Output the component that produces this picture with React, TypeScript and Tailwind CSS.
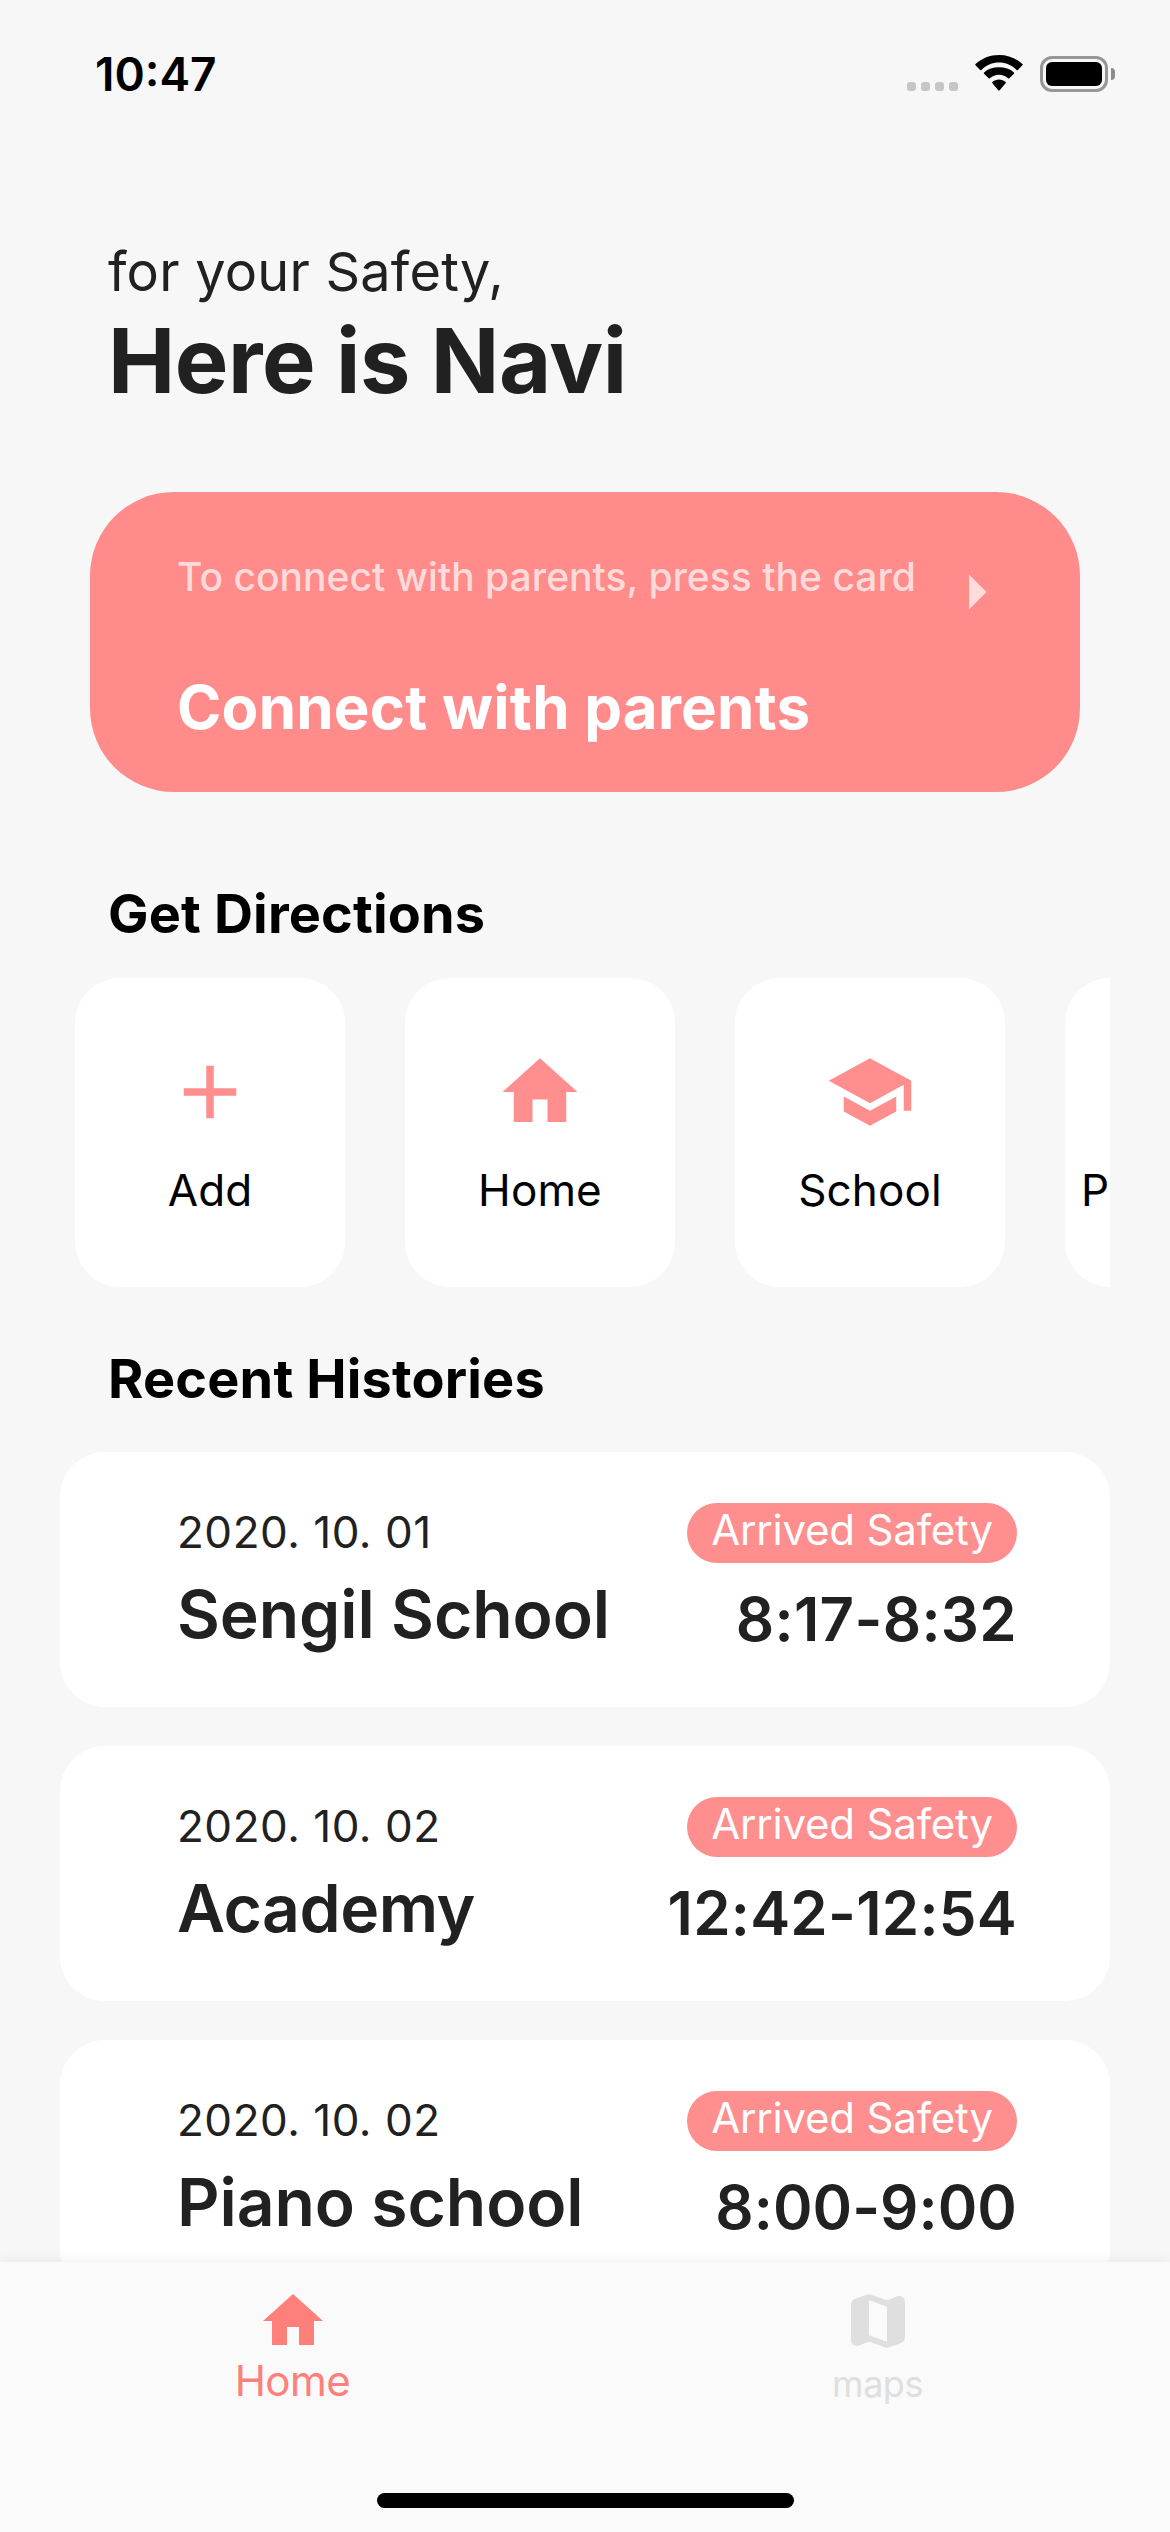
import React from "react";

type IconProps = { className?: string };

const Plus = ({ className }: IconProps) => (
  <svg viewBox="0 0 24 24" fill="currentColor" className={className}>
    <path d="M19 13h-6v6h-2v-6H5v-2h6V5h2v6h6v2z" />
  </svg>
);

const House = ({ className }: IconProps) => (
  <svg viewBox="0 0 24 24" fill="currentColor" className={className}>
    <path d="M10 20v-6h4v6h5v-8h3L12 3 2 12h3v8z" />
  </svg>
);

const Graduation = ({ className }: IconProps) => (
  <svg viewBox="0 0 24 24" fill="currentColor" className={className}>
    <path d="M5 13.18v4L12 21l7-3.82v-4L12 17l-7-3.82zM12 3L1 9l11 6 9-4.91V17h2V9L12 3z" />
  </svg>
);

const MapFold = ({ className }: IconProps) => (
  <svg viewBox="0 0 24 24" fill="currentColor" className={className}>
    <path d="M14.65 4.98l-5-1.75c-.42-.15-.88-.15-1.3-.01L4.36 4.56C3.55 4.84 3 5.6 3 6.46v11.85c0 1.41 1.41 2.37 2.72 1.86l2.93-1.14c.22-.09.47-.09.69-.01l5 1.75c.42.15.88.15 1.3.01l3.99-1.34c.81-.27 1.36-1.04 1.36-1.9V5.69c0-1.41-1.41-2.37-2.72-1.86l-2.93 1.14c-.22.08-.46.09-.69.01zM15 18.89l-6-2.11V5.11l6 2.11v11.67z" />
  </svg>
);

const ArrowRight = ({ className }: IconProps) => (
  <svg viewBox="0 0 24 24" fill="currentColor" className={className}>
    <path d="M10 17l5-5-5-5v10z" />
  </svg>
);

const Wifi = ({ className }: IconProps) => (
  <svg viewBox="0 0 48 36" fill="currentColor" className={className}>
    <path d="M24 7.6c6.8 0 13 2.7 17.6 7.3.35.35.9.35 1.25 0l4.6-4.6c.4-.4.4-.95 0-1.3C41.2 3.300 33 0 24 0S6.800 3.300.55 9c-.4.350-.4.900 0 1.300l4.600 4.600c.35.350.900.350 1.250 0C11 10.300 17.200 7.600 24 7.600z" />
    <path d="M24 19.700c3.500 0 6.700 1.300 9.100 3.500.4.350.900.350 1.250 0l4.600-4.500c.4-.4.400-.950 0-1.300C35 13.800 29.800 12.200 24 12.200S13 13.800 9.050 17.400c-.4.350-.4.900 0 1.300l4.600 4.500c.35.350.850.350 1.250 0 2.400-2.200 5.600-3.500 9.100-3.500z" />
    <path d="M30.600 28.300c.4-.400.400-.900 0-1.250C28.900 25.500 26.600 24.600 24 24.600s-4.900.900-6.600 2.450c-.4.350-.4.850 0 1.250l5.900 6.900c.4.400 1 .4 1.400 0l5.900-6.900z" />
  </svg>
);

const Battery = () => (
  <div className="flex items-center gap-[3px]">
    <div className="h-9 w-[68px] rounded-[12px] border-3 border-[#979797] p-[3px]">
      <div className="h-full w-full rounded-[6px] bg-black" />
    </div>
    <div className="h-3 w-1 rounded-r-full bg-[#8c8c8c]" />
  </div>
);

const StatusBar = () => (
  <div className="flex h-[140px] shrink-0 items-start justify-between pr-[55px] pl-[95px]">
    <div className="mt-[51px] text-[46px] leading-[46px] font-semibold text-black">10:47</div>
    <div className="mt-[55px] flex items-start">
      <div className="mt-[27px] flex gap-[5px]">
        {[0, 1, 2, 3].map((i) => (
          <span key={i} className="size-[9px] rounded-[3px] bg-[#c6c6c6]" />
        ))}
      </div>
      <Wifi className="ml-[17px] h-9 w-12 text-black" />
      <div className="mt-px ml-[17px]">
        <Battery />
      </div>
    </div>
  </div>
);

const places = [
  { label: "Add", Icon: Plus },
  { label: "Home", Icon: House },
  { label: "School", Icon: Graduation },
];

const histories = [
  {
    date: "2020. 10. 01",
    place: "Sengil School",
    placeClass: "tracking-[-0.1px]",
    time: "8:17-8:32",
    timeClass: "tracking-[0.3px]",
  },
  {
    date: "2020. 10. 02",
    place: "Academy",
    placeClass: "tracking-[-0.5px]",
    time: "12:42-12:54",
    timeClass: "tracking-[0.25px]",
  },
  {
    date: "2020. 10. 02",
    place: "Piano school",
    placeClass: "tracking-[-0.1px]",
    time: "8:00-9:00",
    timeClass: "tracking-[0.05px]",
  },
];

const SectionTitle = ({ children }: { children: React.ReactNode }) => (
  <h2 className="pl-[108px] text-[54px] leading-[65px] font-bold tracking-[0.17px] text-black">{children}</h2>
);

export default function App() {
  return (
    <div className="flex h-[2532px] w-[1170px] flex-col overflow-hidden bg-[#f7f7f7] font-['Inter',sans-serif] whitespace-nowrap text-[#212121]">
      <StatusBar />

      <main className="min-h-0 flex-1 overflow-hidden">
        <div className="mt-24 pl-[108px]">
          <p className="text-[54px] leading-[71px] tracking-[0.22px]">for your Safety,</p>
          <h1 className="-mt-px text-[90px] leading-[109px] font-bold tracking-[-0.45px]">Here is Navi</h1>
        </div>

        <div className="mx-[90px] mt-[77px] flex h-[300px] rounded-[84px] bg-[#ff8b8a] pl-[87px] text-white">
          <div className="pt-[61px]">
            <p className="text-[39px] leading-[48px] font-medium tracking-[0.02px] text-white/70">
              To connect with parents, press the card
            </p>
            <p className="mt-[70px] text-[60px] leading-[72px] font-bold tracking-[0.24px]">Connect with parents</p>
          </div>
          <ArrowRight className="mt-[58px] ml-[18px] size-[84px] text-white/70" />
        </div>

        <div className="mt-[89px]">
          <SectionTitle>Get Directions</SectionTitle>
        </div>

        <div className="mt-8 mr-[60px] ml-[75px] flex gap-[60px] overflow-hidden">
          {places.map(({ label, Icon }) => (
            <div
              key={label}
              className="flex h-[309px] w-[270px] shrink-0 flex-col items-center rounded-[45px] bg-white pt-[69px]"
            >
              <Icon className="size-[90px] text-[#ff8e8e]" />
              <span className="mt-[26px] text-[44px] leading-[54px] tracking-[0.15px] text-black">{label}</span>
            </div>
          ))}
          <div className="h-[309px] w-[270px] shrink-0 rounded-[45px] bg-white pt-[185px] pl-4">
            <span className="block text-[44px] leading-[54px] text-black">P</span>
          </div>
        </div>

        <div className="mt-[59px]">
          <SectionTitle>Recent Histories</SectionTitle>
        </div>

        <div className="mx-[60px] mt-[41px] flex flex-col gap-[39px]">
          {histories.map((h, i) => (
            <div
              key={i}
              className="flex h-[255px] items-start justify-between rounded-[45px] bg-white pr-[93px] pl-[117px]"
            >
              <div className="pt-[53px]">
                <p className="text-[44px] leading-[54px] tracking-[0.52px]">{h.date}</p>
                <p className={`mt-[15px] text-[66px] leading-[80px] font-semibold ${h.placeClass}`}>{h.place}</p>
              </div>
              <div className="flex flex-col items-end pt-[51px]">
                <div className="flex h-[60px] w-[330px] items-start justify-center rounded-full bg-[#ff8e8e]">
                  <span className="text-[42px] leading-[54px] tracking-[-0.19px] text-white">Arrived Safety</span>
                </div>
                <p className={`mt-5 text-[60px] leading-[72px] font-semibold ${h.timeClass}`}>{h.time}</p>
              </div>
            </div>
          ))}
        </div>
      </main>

      <nav className="relative flex h-[270px] shrink-0 flex-col items-center bg-[#fafafa] shadow-[0_0_14px_rgba(0,0,0,0.08)]">
        <div className="grid h-[231px] w-full grid-cols-2">
          <div className="flex flex-col items-center pt-[23px] text-[#ff807b]">
            <House className="size-[72px]" />
            <span className="-mt-px text-[42px] leading-[50px] tracking-[-0.5px]">Home</span>
          </div>
          <div className="flex flex-col items-center pt-[23px] text-[#dfdfdf]">
            <MapFold className="size-[72px]" />
            <span className="mt-0.5 text-[36px] leading-[50px] tracking-[-0.5px]">maps</span>
          </div>
        </div>
        <div className="ml-px h-[15px] w-[417px] rounded-full bg-black" />
      </nav>
    </div>
  );
}
